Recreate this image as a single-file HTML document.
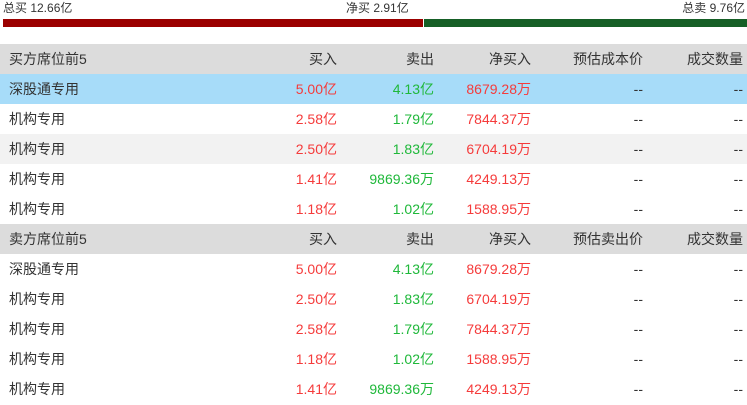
<!DOCTYPE html>
<html><head><meta charset="utf-8"><style>
body{margin:0;width:747px;height:401px;overflow:hidden;background:#fff;font-family:"Liberation Sans","Noto Sans CJK SC",sans-serif;font-size:14px;color:#333}
.top{position:absolute;top:0;height:17px;line-height:17px;font-size:12px;color:#333}
.bar{position:absolute;top:19px;height:8px}
.row{position:absolute;left:0;width:747px;height:30px;line-height:31px}
.row span{position:absolute;white-space:nowrap}
.c0{left:9px}
.c1{right:410px}.c2{right:313px}.c3{right:216px}.c4{right:104px}.c5{right:4px}
.h{background:#dcdcdc}
.r{color:#f53b3b}.g{color:#1fb83a}
</style></head><body>
<div class="top" style="left:3px">总买 12.66亿</div>
<div class="top" style="left:346px">净买 2.91亿</div>
<div class="top" style="right:2px">总卖 9.76亿</div>
<div class="bar" style="left:3px;width:420px;background:#9b0000"></div>
<div class="bar" style="left:424px;width:323px;background:#165f26"></div>

<div class="row h" style="top:44px"><span class="c0">买方席位前5</span><span class="c1">买入</span><span class="c2">卖出</span><span class="c3">净买入</span><span class="c4">预估成本价</span><span class="c5">成交数量</span></div>
<div class="row" style="top:74px;background:#a7dcf9"><span class="c0">深股通专用</span><span class="c1 r">5.00亿</span><span class="c2 g">4.13亿</span><span class="c3 r">8679.28万</span><span class="c4">--</span><span class="c5">--</span></div>
<div class="row" style="top:104px"><span class="c0">机构专用</span><span class="c1 r">2.58亿</span><span class="c2 g">1.79亿</span><span class="c3 r">7844.37万</span><span class="c4">--</span><span class="c5">--</span></div>
<div class="row" style="top:134px;background:#f2f2f2"><span class="c0">机构专用</span><span class="c1 r">2.50亿</span><span class="c2 g">1.83亿</span><span class="c3 r">6704.19万</span><span class="c4">--</span><span class="c5">--</span></div>
<div class="row" style="top:164px"><span class="c0">机构专用</span><span class="c1 r">1.41亿</span><span class="c2 g">9869.36万</span><span class="c3 r">4249.13万</span><span class="c4">--</span><span class="c5">--</span></div>
<div class="row" style="top:194px"><span class="c0">机构专用</span><span class="c1 r">1.18亿</span><span class="c2 g">1.02亿</span><span class="c3 r">1588.95万</span><span class="c4">--</span><span class="c5">--</span></div>

<div class="row h" style="top:224px"><span class="c0">卖方席位前5</span><span class="c1">买入</span><span class="c2">卖出</span><span class="c3">净买入</span><span class="c4">预估卖出价</span><span class="c5">成交数量</span></div>
<div class="row" style="top:254px"><span class="c0">深股通专用</span><span class="c1 r">5.00亿</span><span class="c2 g">4.13亿</span><span class="c3 r">8679.28万</span><span class="c4">--</span><span class="c5">--</span></div>
<div class="row" style="top:284px"><span class="c0">机构专用</span><span class="c1 r">2.50亿</span><span class="c2 g">1.83亿</span><span class="c3 r">6704.19万</span><span class="c4">--</span><span class="c5">--</span></div>
<div class="row" style="top:314px"><span class="c0">机构专用</span><span class="c1 r">2.58亿</span><span class="c2 g">1.79亿</span><span class="c3 r">7844.37万</span><span class="c4">--</span><span class="c5">--</span></div>
<div class="row" style="top:344px"><span class="c0">机构专用</span><span class="c1 r">1.18亿</span><span class="c2 g">1.02亿</span><span class="c3 r">1588.95万</span><span class="c4">--</span><span class="c5">--</span></div>
<div class="row" style="top:374px"><span class="c0">机构专用</span><span class="c1 r">1.41亿</span><span class="c2 g">9869.36万</span><span class="c3 r">4249.13万</span><span class="c4">--</span><span class="c5">--</span></div>
</body></html>
